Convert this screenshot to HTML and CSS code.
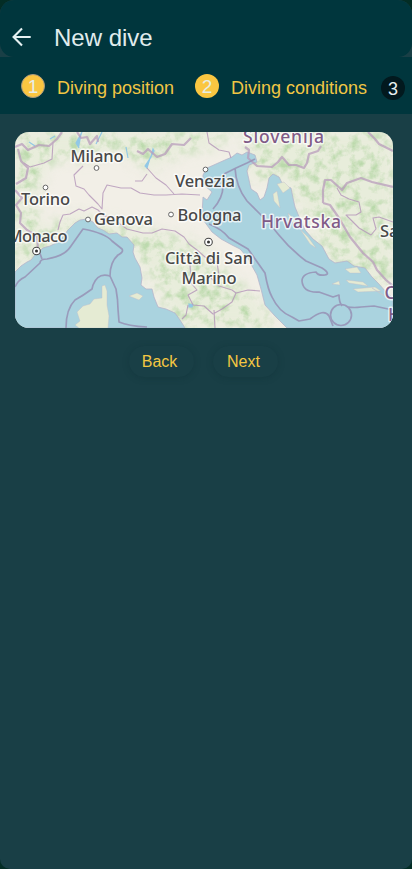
FILE: index.html
```html
<!DOCTYPE html>
<html lang="en">
<head>
<meta charset="utf-8">
<meta name="viewport" content="width=device-width, initial-scale=1">
<title>New dive</title>
<link rel="stylesheet" href="styles.css">
</head>
<body>
<div class="screen">
  <header class="topbar">
    <svg class="back" viewBox="0 0 24 24" aria-label="Back"><path d="M21.5 12H3M12 2.8 2.8 12l9.2 9.2"/></svg>
    <h1>New dive</h1>
  </header>
  <nav class="steps">
    <span class="badge outlined">1</span><span class="step first">Diving position</span>
    <span class="badge">2</span><span class="step second">Diving conditions</span>
    <span class="badge pending">3</span>
  </nav>
  <main>
    <svg class="map" viewBox="15 132 378 196">
      <defs>
        <filter id="woods" x="0" y="0" width="100%" height="100%" color-interpolation-filters="sRGB">
          <feTurbulence type="fractalNoise" baseFrequency=".1" numOctaves="4" seed="8"/>
          <feColorMatrix values="0 0 0 0 .73  0 0 0 0 .85  0 0 0 0 .67  2.6 0 0 0 -1.1"/>
        </filter>
        <filter id="soft" x="-30%" y="-30%" width="160%" height="160%"><feGaussianBlur stdDeviation="7"/></filter>
        <mask id="hills">
          <g fill="#fff" filter="url(#soft)">
            <path d="M15 132H235L220 145 175 155 150 170 115 150 88 158 50 160 35 195 40 230 75 215 100 220 150 232 190 240 220 265 255 300 280 328H180L130 245 80 228 15 275Z"/>
            <path d="M245 132H393V290L330 260 285 180 250 180Z"/>
            <path d="M70 290H115V328H70Z"/>
          </g>
        </mask>
      </defs>
      <rect x="15" y="132" width="378" height="196" fill="#f2efe7"/>
      <g mask="url(#hills)">
        <rect x="15" y="132" width="378" height="196" fill="#e0ebd2" opacity=".55"/>
        <rect x="15" y="132" width="378" height="196" filter="url(#woods)"/>
      </g>
      <g class="sea">
        <path d="M15 272 21 266 27 262 31 260 35 255 43 248 50 246 60 241 65 234 68 230 75 223 80 220 87 219 93 222 98 228 103 230 109 234 117 233 122 237 127 237 134 245 133 252 135 258 140 267 142 278 141 285 146 289 152 289 154 297 158 307 166 309 175 313 180 320 185 328H15Z"/>
        <path d="M203 197 207 200 212 192 203 184 203 175 207 168 216 164 225 160 232 157 237 153 242 155 247 152 255 155 257 162 249 165 247 171 249 180 251 189 257 193 260 200 264 197 267 188 269 178 273 174 279 177 283 185 291 188 293 198 295 207 300 219 305 230 313 239 322 246 329 259 335 263 347 261 354 266 365 268 372 277 378 283 387 293 393 298V328H287L275 316 265 305 261 289 257 275 252 266 248 258 240 249 232 245 221 239 212 232 204 221 202 215Z"/>
      </g>
      <g class="land">
        <path d="M77 312 83 306 90 304 94 299 102 298 102 286 105 285 107 291 107 305 109 316 108 328H79L75 325 80 321Z"/>
        <path d="M129 296 137 293 143 296 139 300ZM277 184 284 182 290 188 283 193ZM273 194 277 191 280 208 274 201ZM345 269 357 267 361 273 350 273ZM332 284 339 281 340 285ZM346 280 363 282 368 286 349 283ZM353 289 375 287 381 291 358 292ZM300 229 308 237 316 248 310 244ZM288 213 293 218 297 226 290 220ZM372 288 390 299 381 294Z"/>
      </g>
      <g class="lake">
        <path d="M145 166 151 157 153 149 154 151 150 158 147 168ZM82 132 76 143 79 148M102 132 96 144M126 147 128 158M29 142 35 146M50 139 55 136M189 304 193 305 192 307 189 307Z"/>
      </g>
      <g class="border">
        <path class="wide" d="M15 147 22 144 28 150 39 145 49 146 57 139 62 132M18 149 21 161 28 168 26 178 16 184M15 190 22 198 16 205 21 213 20 223 27 230 37 236 38 249M77 132 81 138 87 137 90 144 97 136 98 142M137 151 143 154 148 149 157 157 165 154 172 144 184 145 191 138M245 147 249 150 248 158 257 166 272 167 278 162 282 157 289 165 296 165 304 168 307 163 309 154 318 151 321 146M368 132 375 139 379 144 393 151M323 203 323 190 325 180 331 180 342 190 347 183 361 178 372 182 393 187M323 203 330 205 339 218 350 237 363 253 373 262 377 270 386 280 393 286"/>
        <path d="M207 132 209 143 219 150 229 152 231 158M24 163 30 167 44 163 52 159 53 142M83 166 74 175 76 186 84 189 89 195 98 204 102 209 103 193 107 185 121 188 131 188 140 193 154 195 166 195 182 194 200 195M135 181 142 181 147 174M58 230 60 222 63 215 70 214 79 209 84 211 92 207 98 210 104 216 113 217 120 224 127 229 143 233 152 233 162 229 175 231 184 237 189 244 197 250 205 257 217 262 219 276 214 282M147 168 156 178 166 185 174 194M190 264 191 283 197 290 188 295 193 305 204 306 213 314 222 309 232 302 236 293 248 290 260 291M211 278 219 286 232 290 236 293M188 305 186 315 182 319M214 310 215 328M337 188 341 195 349 199 359 202 361 212 356 215 346 215 359 228 371 235 376 229 373 218 379 217 393 222"/>
      </g>
      <g class="border offshore">
        <path d="M15 287Q18 280 25 277L40 263Q40 259 47 259 65 256 71 246L83 229Q105 233 112 241L122 249Q124 252 118 255 110 262 110 276M110 276Q98 272 93 285L92 289Q84 295 75 300 66 309 66 328M110 276 116 289Q118 300 118 309L119 322Q128 326 147 327"/>
        <path d="M213 209Q223 198 223 186L224 174M224 174 236 168 247 163 255 159M235 168Q236 187 247 201L260 214Q271 225 278 234 290 249 306 261L322 268Q331 274 325 275 318 276 316 272 302 273 302 281 303 293 319 292L333 297 339 295Q339 302 342 306M209 224Q222 229 229 238L248 249Q258 263 265 273 268 290 272 297 279 312 292 317L299 321 310 319Q324 308 329 316L333 326M348 307Q354 308 361 307L374 306 393 310M38 248 42 259"/>
        <circle cx="341" cy="315" r="10.5"/>
      </g>
      <g class="city">
        <circle cx="96.5" cy="168" r="2.4"/><circle cx="45.5" cy="187.5" r="2.4"/><circle cx="88" cy="219.5" r="2.4"/><circle cx="205.5" cy="169.5" r="2.4"/><circle cx="171" cy="214.5" r="2.4"/>
        <circle class="capital" cx="36.5" cy="251" r="3.8"/><circle class="capital" cx="208.5" cy="242" r="3.8"/>
        <circle class="dot" cx="36.5" cy="251" r="1.5"/><circle class="dot" cx="208.5" cy="242" r="1.5"/>
      </g>
      <g class="label">
        <text x="70.5" y="161.5" textLength="53">Milano</text>
        <text x="21" y="204.5" textLength="49">Torino</text>
        <text x="94" y="225" textLength="59">Genova</text>
        <text x="7.5" y="242" textLength="60">Monaco</text>
        <text x="175" y="186.5" textLength="60">Venezia</text>
        <text x="177.500" y="221" textLength="64">Bologna</text>
        <text x="165" y="263.500" textLength="88">Città di San</text>
        <text x="181.500" y="284" textLength="55">Marino</text>
        <text x="380" y="236.500">Sa</text>
      </g>
      <g class="label country">
        <text x="243" y="143" textLength="81">Slovenija</text>
        <text x="261" y="227.500" textLength="80">Hrvatska</text>
        <text x="384.500" y="299">C</text>
        <text x="388" y="321">H</text>
      </g>
    </svg>
    <div class="actions"><button>Back</button><button>Next</button></div>
  </main>
</div>
</body>
</html>
```
FILE: styles.css
```css
* { box-sizing: border-box; }
body { margin: 0; background: #032d25; font-family: "Liberation Sans", Arial, sans-serif; }
.screen { height: 869px; overflow: hidden; border-radius: 14px 14px 10px 10px; background: #193f46; }
.topbar { height: 57px; padding: 19px 0 0 11px; display: flex; align-items: center; background: #00363d; border-radius: 14px; }
.back { width: 22px; height: 22px; margin-top: -3px; fill: none; stroke: #e5f1f2; stroke-width: 2.3; }
h1 { margin: 0 0 0 21px; color: #e0eced; font-size: 24px; line-height: 28px; font-weight: 400; }
.steps { height: 57px; padding: 4px 0 0 21px; display: flex; align-items: center; background: #00363d; white-space: nowrap; font-size: 18px; color: #f1c644; }
.badge { flex: none; width: 24px; height: 24px; margin-top: -4px; border-radius: 50%; background: #fac641; color: #e7eee5; font-size: 19px; line-height: 25px; text-align: center; }
.outlined { border: 1px solid #a99a80; line-height: 23px; }
.pending { margin-top: 0; background: #02191e; color: #e6eff0; font-size: 18px; line-height: 26px; }
.step { flex: none; padding: 2px 0 0 12px; }
.first { width: 150px; }
.second { width: 162px; }
main { padding: 18px 15px 0; }
.map { display: block; width: 378px; height: 196px; border-radius: 14px; }
.sea path { fill: #aad3df; stroke: #b6b5ca; stroke-width: .8; }
.land path { fill: #e5ebd3; stroke: #c1bdc9; stroke-width: .4; }
.lake path { fill: #91c8e6; stroke: #91c8e6; stroke-width: 1.2; }
.border { fill: none; stroke: #b79abb; stroke-width: 1.1; stroke-linejoin: round; opacity: .85; }
.border .wide { stroke-width: 2.2; opacity: .85; }
.offshore { stroke: #9791b5; stroke-width: 1.7; }
.city circle { fill: #fff; stroke: #666; stroke-width: 1; }
.city .capital { stroke: #444; stroke-width: 1.1; }
.city .dot { fill: #333; stroke: none; }
.label { font: 500 16.5px "Noto Sans", sans-serif; fill: #484848; stroke: #ffffffb8; stroke-width: 3px; stroke-linejoin: round; paint-order: stroke; }
.country { font-size: 17.5px; fill: #805b87; }
.actions { display: flex; justify-content: center; gap: 19px; margin-top: 18px; padding-right: 5px; }
button { width: 65px; height: 31px; padding: 0 4px 0 0; border: 0; border-radius: 16px; background: #193f46; color: #f4c742; font: 16px "Liberation Sans", Arial, sans-serif; box-shadow: 0 1px 6px #10313866; }
```
